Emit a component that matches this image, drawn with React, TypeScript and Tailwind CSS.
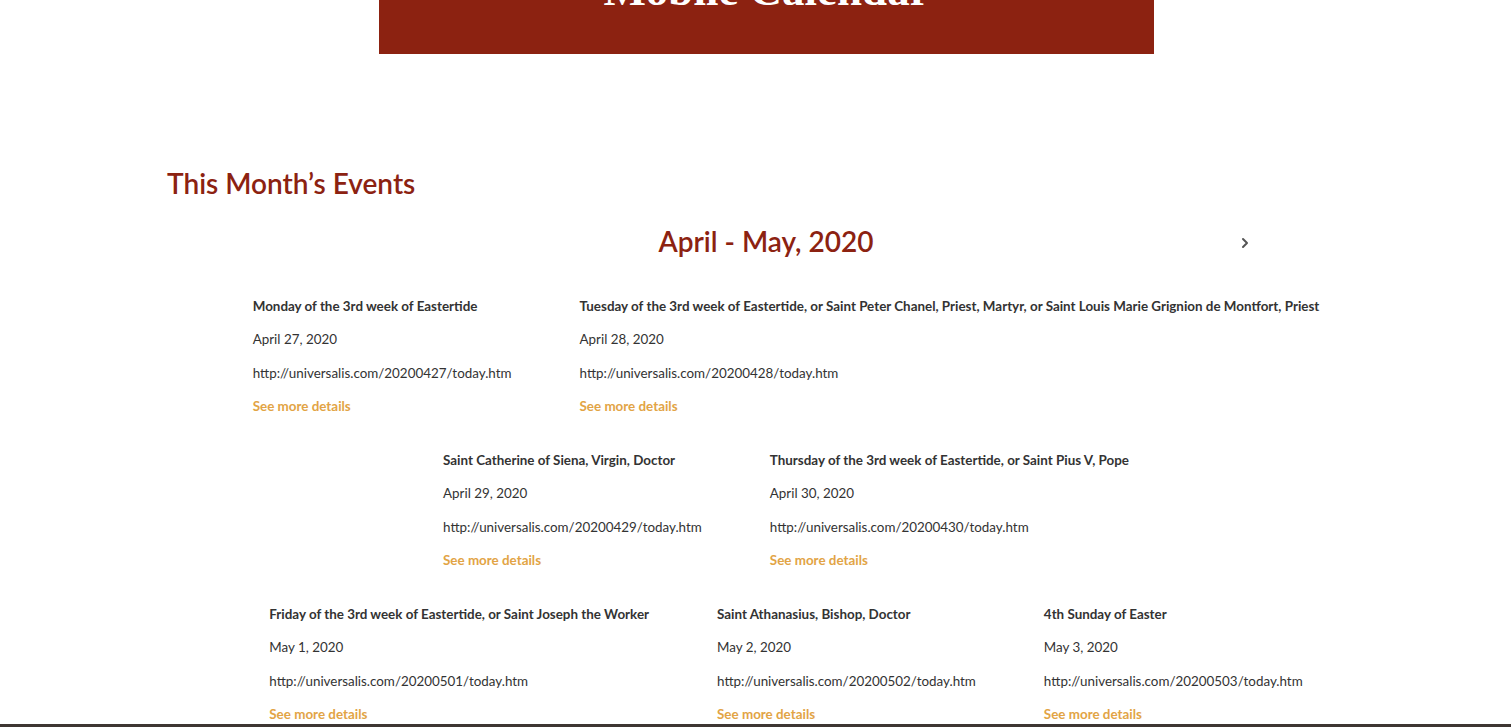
import { ChevronRight } from "lucide-react";

interface CalEvent {
  title: string;
  date: string;
  url: string;
}

const ROWS: CalEvent[][] = [
  [
    {
      title: "Monday of the 3rd week of Eastertide",
      date: "April 27, 2020",
      url: "http://universalis.com/20200427/today.htm",
    },
    {
      title:
        "Tuesday of the 3rd week of Eastertide, or Saint Peter Chanel, Priest, Martyr, or Saint Louis Marie Grignion de Montfort, Priest",
      date: "April 28, 2020",
      url: "http://universalis.com/20200428/today.htm",
    },
  ],
  [
    {
      title: "Saint Catherine of Siena, Virgin, Doctor",
      date: "April 29, 2020",
      url: "http://universalis.com/20200429/today.htm",
    },
    {
      title: "Thursday of the 3rd week of Eastertide, or Saint Pius V, Pope",
      date: "April 30, 2020",
      url: "http://universalis.com/20200430/today.htm",
    },
  ],
  [
    {
      title: "Friday of the 3rd week of Eastertide, or Saint Joseph the Worker",
      date: "May 1, 2020",
      url: "http://universalis.com/20200501/today.htm",
    },
    {
      title: "Saint Athanasius, Bishop, Doctor",
      date: "May 2, 2020",
      url: "http://universalis.com/20200502/today.htm",
    },
    {
      title: "4th Sunday of Easter",
      date: "May 3, 2020",
      url: "http://universalis.com/20200503/today.htm",
    },
  ],
];

function EventItem({ ev }: { ev: CalEvent }) {
  return (
    <div className="flex flex-col text-[13.4px] leading-[17px] text-[#333333]">
      <div className="font-bold whitespace-nowrap">{ev.title}</div>
      <div className="mt-[16px]">{ev.date}</div>
      <div className="mt-[17px] whitespace-nowrap">{ev.url}</div>
      <a className="mt-[16px] font-bold text-[#e2a445] cursor-pointer">See more details</a>
    </div>
  );
}

export default function App() {
  return (
    <div className="min-h-[727px] flex flex-col bg-white font-['Lato','Noto_Sans',sans-serif]">
      <div className="pl-[379px]">
        <div className="w-[775px] h-[54px] bg-[#8c2211] overflow-hidden flex justify-center">
          <h1 className="mt-[-32px] h-[50px] text-[45px] leading-[45px] font-bold text-white font-['Liberation_Serif',serif] whitespace-nowrap">
            Mobile Calendar
          </h1>
        </div>
      </div>

      <div className="pl-[167px] pt-[112px]">
        <h2 className="text-[28px] leading-[34px] font-semibold text-[#8c2211]">This Month’s Events</h2>

        <div className="mt-[24px] w-[1198px] flex items-center">
          <div className="w-[123px]" />
          <div className="flex-1 text-center text-[28px] leading-[34px] font-semibold text-[#8c2211]">
            April - May, 2020
          </div>
          <div className="w-[123px] flex">
            <ChevronRight className="w-[16px] h-[16px] text-[#555555] ml-[-5px] mt-[3px]" strokeWidth={3} />
          </div>
        </div>

        <div className="mt-[40px] w-[1238px] flex flex-col gap-[37px]">
          {ROWS.map((row, i) => (
            <div key={i} className="flex justify-center gap-[68px]">
              {row.map((ev) => (
                <EventItem key={ev.url} ev={ev} />
              ))}
            </div>
          ))}
        </div>
      </div>

      <div className="mt-auto h-[3px] bg-[#3e3632]" />
    </div>
  );
}
